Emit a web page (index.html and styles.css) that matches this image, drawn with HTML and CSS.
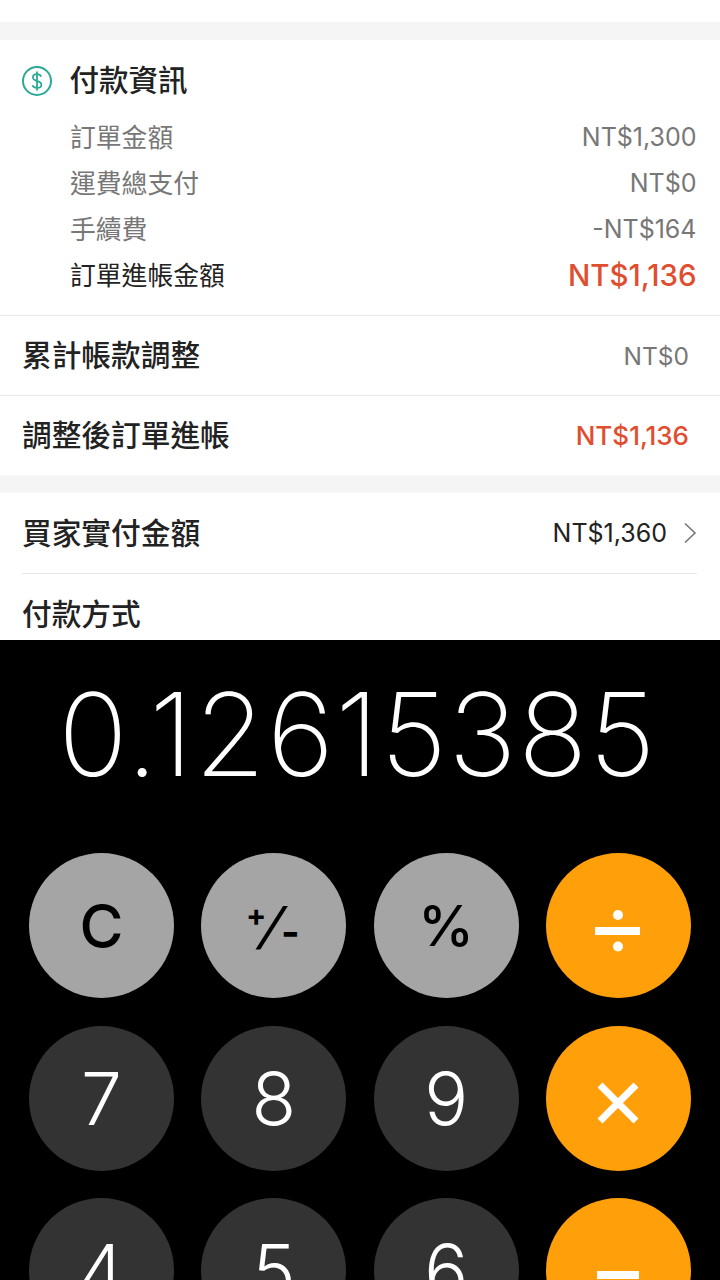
FILE: index.html
```html
<!DOCTYPE html>
<html lang="zh-Hant">
<head>
<meta charset="utf-8">
<title>付款資訊</title>
<link rel="stylesheet" href="styles.css">
</head>
<body>
<main class="screen">
  <section class="orders">
    <div class="top-strip"></div>
    <div class="spacer"></div>
    <div class="card">
      <div class="pay-head">
        <svg class="dollar" width="30" height="30" viewBox="0 0 30 30" aria-hidden="true">
          <circle cx="15" cy="15" r="14" fill="none" stroke="#2ca896" stroke-width="2"/>
          <path d="M19.200 10.600c-.6-1.500-2.200-2.400-4.200-2.400-2.400 0-4.100 1.300-4.100 3.300 0 4.500 8.500 2.600 8.500 7 0 2.100-1.900 3.500-4.400 3.500-2.200 0-3.900-1-4.500-2.700M15 5.600v18.800" fill="none" stroke="#2ca896" stroke-width="1.800"/>
        </svg>
        <h2 class="pay-title">付款資訊</h2>
      </div>
      <ul class="lines">
        <li class="line"><span class="line-label">訂單金額</span><span class="num">NT$1,300</span></li>
        <li class="line"><span class="line-label">運費總支付</span><span class="num">NT$0</span></li>
        <li class="line"><span class="line-label">手續費</span><span class="num">-NT$164</span></li>
        <li class="line line-total"><span class="line-label">訂單進帳金額</span><span class="num num-total">NT$1,136</span></li>
      </ul>
    </div>
    <div class="row row-ruled">
      <span class="row-label">累計帳款調整</span>
      <span class="row-value muted">NT$0</span>
    </div>
    <div class="row row-ruled">
      <span class="row-label">調整後訂單進帳</span>
      <span class="row-value red">NT$1,136</span>
    </div>
    <div class="spacer"></div>
    <div class="card-inset">
      <div class="row row-inset">
        <span class="row-label">買家實付金額</span>
        <span class="row-end">
          <span class="row-value dark">NT$1,360</span>
          <svg class="chevron" width="14" height="22" viewBox="0 0 14 22" aria-hidden="true">
            <path d="M2 1.500 12 11 2 20.500" fill="none" stroke="#777" stroke-width="1.600"/>
          </svg>
        </span>
      </div>
      <div class="row row-inset">
        <span class="row-label">付款方式</span>
      </div>
    </div>
  </section>

  <section class="calc">
    <div class="display">0.12615385</div>
    <div class="keys">
      <div class="key key-fn key-c">C</div>
      <div class="key key-fn key-sign"><span class="sign-plus">+</span><span class="sign-slash">/</span><span class="sign-minus">-</span></div>
      <div class="key key-fn key-pct">%</div>
      <div class="key key-op" aria-label="÷">
        <svg width="145" height="145" viewBox="0 0 145 145"><rect x="49" y="74" width="45" height="8" fill="#fff"/><circle cx="72" cy="62" r="5" fill="#fff"/><circle cx="72" cy="93.500" r="5" fill="#fff"/></svg>
      </div>
      <div class="key key-num">7</div>
      <div class="key key-num">8</div>
      <div class="key key-num">9</div>
      <div class="key key-op" aria-label="×">
        <svg width="145" height="145" viewBox="0 0 145 145"><path d="M54 59 90 95M90 59 54 95" stroke="#fff" stroke-width="7" fill="none"/></svg>
      </div>
      <div class="key key-num">4</div>
      <div class="key key-num">5</div>
      <div class="key key-num">6</div>
      <div class="key key-op" aria-label="−">
        <svg width="145" height="145" viewBox="0 0 145 145"><rect x="51" y="73" width="42" height="8" fill="#fff"/></svg>
      </div>
    </div>
  </section>
</main>
</body>
</html>
```

FILE: styles.css
```css
* { box-sizing: border-box; }
html, body { margin: 0; padding: 0; background: #000; }
.screen {
  width: 720px;
  height: 1280px;
  overflow: hidden;
  display: flex;
  flex-direction: column;
  font-family: Inter, "Noto Sans CJK TC", sans-serif;
}
.orders {
  height: 640px;
  flex: none;
  overflow: hidden;
  background: #fff;
  color: #222;
}
.top-strip { height: 22px; }
.spacer { height: 18px; background: #f5f5f5; }
.card { padding-bottom: 17px; }
.pay-head {
  height: 74px;
  padding: 5px 0 0 22px;
  display: flex;
  align-items: center;
  gap: 17.500px;
}
.dollar { flex: none; margin-top: 3px; }
.pay-title { margin: 0; font-size: 29.500px; font-weight: 500; line-height: 40px; }
.lines { list-style: none; margin: 0; padding: 0 23.500px 0 70px; }
.line {
  height: 46px;
  display: flex;
  align-items: center;
  justify-content: space-between;
  color: #777;
}
.line-label { font-size: 25.800px; line-height: 36px; padding-top: 2px; }
.line-total { color: #222; }
.num { font-size: 25px; }
.num-total { color: #e04e30; font-size: 29.500px; font-weight: 500; }
.row {
  height: 80px;
  display: flex;
  align-items: center;
  justify-content: space-between;
}
.row-ruled { padding: 0 31px 0 22px; border-top: 1px solid #e8e8e8; }
.row-label { font-size: 29.700px; font-weight: 500; line-height: 40px; padding-bottom: 1px; }
.row-value { font-size: 25px; }
.muted { color: #777; font-size: 24.500px; }
.red { color: #e04e30; font-weight: 500; font-size: 26px; }
.dark { color: #222; }
.card-inset { padding: 0 23px 0 22px; }
.row-inset + .row-inset { border-top: 1px solid #e8e8e8; height: 81px; }
.row-end { display: flex; align-items: center; gap: 16px; }
.chevron { flex: none; }

.calc { flex: 1; background: #000; overflow: hidden; }
.display {
  height: 188px;
  margin-bottom: 25px;
  padding-right: 5px;
  display: flex;
  align-items: center;
  justify-content: center;
  color: #fff;
  font-size: 115px;
  font-weight: 200;
  letter-spacing: 1.400px;
  white-space: nowrap;
}
.keys {
  display: grid;
  grid-template-columns: repeat(4, 145px);
  grid-auto-rows: 145px;
  column-gap: 27.330px;
  row-gap: 27.600px;
  padding: 0 29px;
}
.key {
  width: 145px;
  height: 145px;
  border-radius: 50%;
  display: flex;
  align-items: center;
  justify-content: center;
}
.key-fn { background: #a5a5a5; color: #000; font-size: 60px; font-weight: 500; }
.key-num { background: #333; color: #fff; font-size: 73px; font-weight: 300; }
.key-op { background: #ff9f0a; }
.sign-plus { font-size: 30px; font-weight: 700; transform: translate(1px, -11px); }
.sign-slash { font-size: 50px; font-weight: 500; transform: translateX(-2px) skewX(-20deg); }
.sign-minus { font-size: 40px; font-weight: 700; transform: translate(-3px, 6px); }
.key-pct { font-size: 56px; }
```
